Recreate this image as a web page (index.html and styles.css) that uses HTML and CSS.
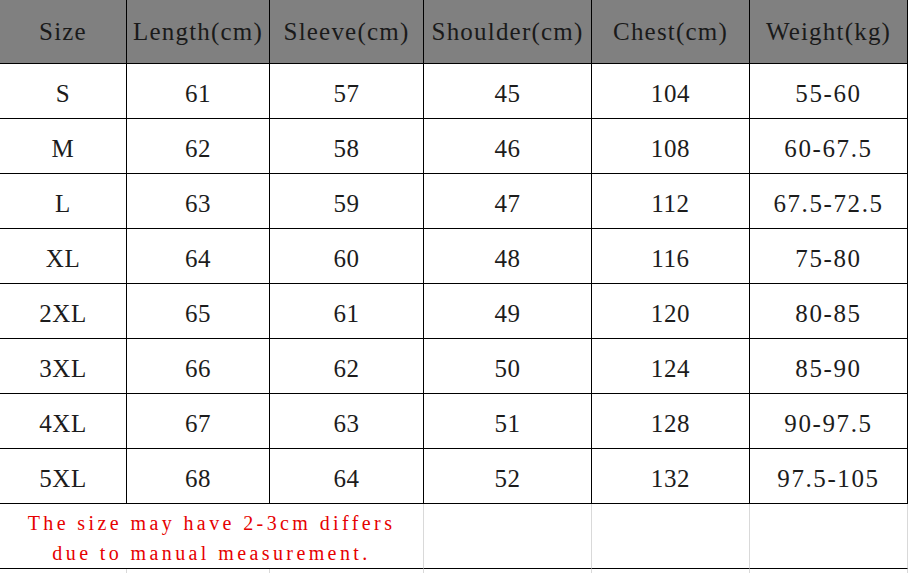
FILE: index.html
```html
<!DOCTYPE html>
<html>
<head>
<meta charset="utf-8">
<link rel="stylesheet" href="styles.css">
</head>
<body>
<div class="sheet">
  <div class="cell head">Size</div>
  <div class="cell head">Length(cm)</div>
  <div class="cell head">Sleeve(cm)</div>
  <div class="cell head">Shoulder(cm)</div>
  <div class="cell head">Chest(cm)</div>
  <div class="cell head">Weight(kg)</div>

  <div class="cell">S</div><div class="cell">61</div><div class="cell">57</div><div class="cell">45</div><div class="cell">104</div><div class="cell wt">55-60</div>
  <div class="cell">M</div><div class="cell">62</div><div class="cell">58</div><div class="cell">46</div><div class="cell">108</div><div class="cell wt">60-67.5</div>
  <div class="cell">L</div><div class="cell">63</div><div class="cell">59</div><div class="cell">47</div><div class="cell">112</div><div class="cell wt">67.5-72.5</div>
  <div class="cell">XL</div><div class="cell">64</div><div class="cell">60</div><div class="cell">48</div><div class="cell">116</div><div class="cell wt">75-80</div>
  <div class="cell">2XL</div><div class="cell">65</div><div class="cell">61</div><div class="cell">49</div><div class="cell">120</div><div class="cell wt">80-85</div>
  <div class="cell">3XL</div><div class="cell">66</div><div class="cell">62</div><div class="cell">50</div><div class="cell">124</div><div class="cell wt">85-90</div>
  <div class="cell">4XL</div><div class="cell">67</div><div class="cell">63</div><div class="cell">51</div><div class="cell">128</div><div class="cell wt">90-97.5</div>
  <div class="cell">5XL</div><div class="cell">68</div><div class="cell">64</div><div class="cell">52</div><div class="cell">132</div><div class="cell wt">97.5-105</div>

  <div class="cell note">The size may have 2-3cm differs<br>due to manual measurement.</div>
  <div class="cell blank"></div>
  <div class="cell blank"></div>
  <div class="cell blank"></div>

  <div class="cell grid"></div><div class="cell grid"></div><div class="cell grid"></div><div class="cell grid"></div><div class="cell grid"></div><div class="cell grid"></div>
</div>
</body>
</html>
```

FILE: styles.css
```css
html, body {
  margin: 0;
  padding: 0;
  background: #fff;
}

.sheet {
  display: grid;
  grid-template-columns: 127px 143px 154px 168px 158px 158px;
  grid-template-rows: 64px repeat(8, 55px) 65px 10px;
  font-family: "Liberation Serif", "DejaVu Serif", serif;
  color: #1c1c1c;
}

.cell {
  box-sizing: border-box;
  border-right: 1px solid #000;
  border-bottom: 1px solid #000;
  display: flex;
  align-items: center;
  justify-content: center;
  font-size: 25px;
  letter-spacing: 0.6px;
  padding-top: 5px;
  white-space: nowrap;
}

.wt {
  letter-spacing: 1.6px;
}

.head {
  background: #808080;
  color: #1a1a1a;
  letter-spacing: 1.2px;
  padding-top: 0;
}

.note {
  grid-column: span 3;
  border-right-color: #d9d9d9;
  color: #e60000;
  font-size: 20px;
  letter-spacing: 3.4px;
  line-height: 30px;
  text-align: center;
  padding-top: 4px;
}

.blank {
  border-right-color: #d9d9d9;
}

.grid {
  border-right-color: #d9d9d9;
  border-bottom: none;
}
```
